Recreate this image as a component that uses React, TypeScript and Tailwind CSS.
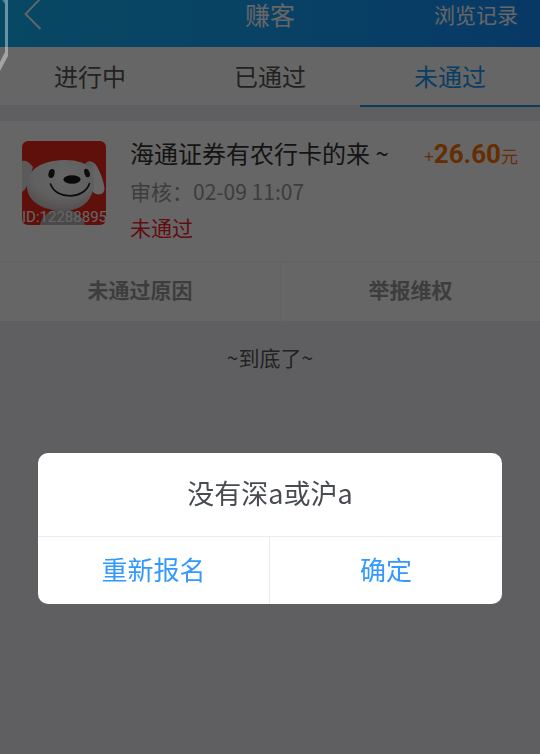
import { ReactNode } from "react";
import clsx from "clsx";

const TABS = ["进行中", "已通过", "未通过"];

function Header() {
  return (
    <header className="grid h-[47px] grid-cols-3 items-start bg-linear-to-r from-[#12b4fa] via-[#17a5fb] to-[#148eff] px-[22px] leading-7 text-white">
      <button type="button" aria-label="返回" className="w-5">
        <svg viewBox="0 0 20 30" className="h-[30px] w-5" fill="none" stroke="currentColor" strokeWidth="1.8">
          <path d="M18.500 -1.500 L3.500 14 L18.500 29" />
        </svg>
      </button>
      <h1 className="text-center text-[25px]">赚客</h1>
      <a href="#history" className="text-right text-[21px]">浏览记录</a>
    </header>
  );
}

function TabBar({ active }: { active: string }) {
  return (
    <nav className="grid h-[60px] grid-cols-3 bg-white">
      {TABS.map((tab) => (
        <button
          key={tab}
          type="button"
          className={clsx(
            "border-b-2 text-2xl",
            tab === active ? "border-[#1898f5] text-[#1898f5]" : "border-[#eeeef2] text-[#555]"
          )}
        >
          {tab}
        </button>
      ))}
    </nav>
  );
}

function Avatar({ id }: { id: string }) {
  return (
    <div className="relative mt-[6px] size-[84px] shrink-0">
      <svg viewBox="0 0 84 84" className="size-full rounded-md">
        <defs>
          <radialGradient id="face" cx="0.55" cy="0.3" r="0.75">
            <stop offset="0" stopColor="#fff" />
            <stop offset="0.6" stopColor="#f1efef" />
            <stop offset="1" stopColor="#c9bdbc" />
          </radialGradient>
          <linearGradient id="ear" x1="0" y1="0" x2="1" y2="0.3">
            <stop offset="0" stopColor="#cfc9c9" />
            <stop offset="0.6" stopColor="#fff" />
          </linearGradient>
        </defs>
        <rect width="84" height="84" fill="#f02a1c" />
        <path d="M18 84 C19 76 27 68 40 68 C53 68 61 76 63 84 Z" fill="#b9b5b5" />
        <path d="M0 20 C4 19 8 22 11 26 L6 42 C5 46 3 49 0 51 Z" fill="#e4e0e0" />
        <path d="M62 25 C64 19 70 19 74 24 C79 32 82 41 82.500 48 C82 53 78 54 74 53 C70 52 68 45 66 39 Z" fill="url(#ear)" />
        <path d="M41 19 C54 18.500 65 22 69 28 C74 37 73 52 65 61 C57 69 44 72 31 69 C15 66 4 57 5 43 C6 28 20 20 41 19 Z" fill="url(#face)" />
        <ellipse cx="29.500" cy="32.500" rx="3" ry="4.600" transform="rotate(14 29.500 32.500)" fill="#222" />
        <ellipse cx="65" cy="32" rx="2.600" ry="4.400" transform="rotate(-20 65 32)" fill="#222" />
        <ellipse cx="50" cy="38.500" rx="8.600" ry="4.200" fill="#1c1718" />
        <path d="M28.500 43 C34 59 62 59 67.500 42.500" fill="none" stroke="#222" strokeWidth="1.700" strokeLinecap="round" />
      </svg>
      <span className="absolute inset-x-0 bottom-0 text-center font-[Roboto] text-[15px] leading-4 whitespace-nowrap text-white">
        {id}
      </span>
    </div>
  );
}

function CardAction({ children }: { children: ReactNode }) {
  return (
    <button type="button" className="h-[59px] pb-1 text-[21px] font-bold text-[#999]">
      {children}
    </button>
  );
}

function TaskCard() {
  return (
    <article className="mt-[14px] bg-white">
      <div className="flex gap-6 px-[22px] pt-[14px] pb-4">
        <Avatar id="ID:12288895" />
        <div className="flex-1 text-[21px] leading-9">
          <div className="flex h-9 items-baseline justify-between whitespace-nowrap">
            <h2 className="text-2xl leading-9 text-[#333]">海通证券有农行卡的来 ~</h2>
            <p className="text-[17px] leading-9 text-[#ff7000]">
              +<b className="font-[Roboto] text-[26px] font-bold">26.60</b>元
            </p>
          </div>
          <p className="mt-0.5 text-[#999]">审核：02-09 11:07</p>
          <p className="text-[#f5222d]">未通过</p>
        </div>
      </div>
      <div className="grid grid-cols-[13fr_12fr] divide-x divide-[#f2f2f5] border-t border-[#f2f2f5]">
        <CardAction>未通过原因</CardAction>
        <CardAction>举报维权</CardAction>
      </div>
    </article>
  );
}

function Dialog() {
  return (
    <div className="fixed inset-0 flex items-end bg-black/60 px-[38px] pb-[150px]">
      <div role="dialog" aria-modal="true" aria-labelledby="dialog-title" className="w-full overflow-hidden rounded-[10px] bg-white">
        <p id="dialog-title" className="pt-[22px] pb-[25px] text-center text-[27px] leading-9 text-[#484b50]">
          没有深a或沪a
        </p>
        <div className="grid grid-cols-2 divide-x divide-[#ebebef] border-t border-[#ebebef] text-[26px] text-[#3399ff]">
          <button type="button" className="h-[67px] pb-1">重新报名</button>
          <button type="button" className="h-[67px] pb-1">确定</button>
        </div>
      </div>
    </div>
  );
}

// Edge of the floating panel that hangs over the left side of the screen
function FloatingEdge() {
  return (
    <svg viewBox="0 0 8 72" className="fixed top-0 left-0 h-[72px] w-2" aria-hidden="true">
      <path d="M5 0 H8 V56 L0 71 V62 L5 52 Z" fill="#fff" opacity="0.4" />
      <path d="M2 0 H5 V4 Z" fill="#4fa59a" opacity="0.7" />
    </svg>
  );
}

export default function App() {
  return (
    <div className="min-h-screen bg-[#eeeef2] font-['Noto_Sans_CJK_SC',sans-serif]">
      <Header />
      <TabBar active="未通过" />
      <main>
        <TaskCard />
        <p className="py-[18px] text-center text-[21px] leading-9 text-[#555]">~到底了~</p>
      </main>
      <Dialog />
      <FloatingEdge />
    </div>
  );
}
